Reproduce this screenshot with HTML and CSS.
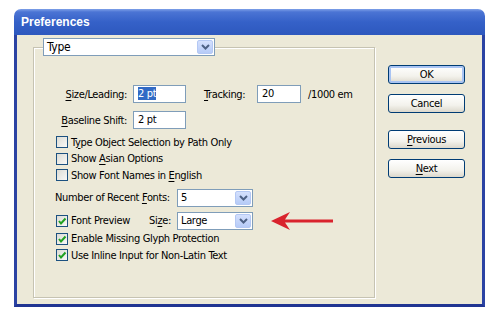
FILE: index.html
```html
<!DOCTYPE html>
<html lang="en">
<head>
    <meta charset="UTF-8">
    <title>Preferences</title>
    <link rel="stylesheet" href="styles.css">
</head>
<body>

    <div class="window">
        <div class="titlebar">Preferences</div>
        <div class="client">
            <div class="group">
                <div class="select type-select">
                    <span class="value">Type</span>
                    <span class="drop"><svg width="9" height="6" viewBox="0 0 9 6"><path d="M1 1 L4.5 4.5 L8 1" fill="none" stroke="#4d6185" stroke-width="2"/></svg></span>
                </div>

                <div class="fields">
                    <span class="lbl"><u>S</u>ize/Leading:</span>
                    <span class="field wide"><span class="hl">2 pt</span></span>
                    <span class="track"><u>T</u>racking:</span>
                    <span class="field narrow">20</span>
                    <span class="unit">/1000 em</span>

                    <span class="lbl"><u>B</u>aseline Shift:</span>
                    <span class="field wide">2 pt</span>
                </div>

                <div class="checks first">
                    <label class="check"><span class="box"></span><span>T<u>y</u>pe Object Selection by Path Only</span></label>
                    <label class="check"><span class="box"></span><span>Show <u>A</u>sian Options</span></label>
                    <label class="check"><span class="box"></span><span>Show Font Names in <u>E</u>nglish</span></label>
                </div>

                <div class="recent">
                    <span class="lbl-left">Number of Recent <u>F</u>onts:</span>
                    <div class="select small">
                        <span class="value">5</span>
                        <span class="drop"><svg width="9" height="6" viewBox="0 0 9 6"><path d="M1 1 L4.5 4.5 L8 1" fill="none" stroke="#4d6185" stroke-width="2"/></svg></span>
                    </div>
                    <span></span>

                    <div class="preview">
                        <label class="check"><span class="box on"><svg width="10" height="10" viewBox="0 0 10 10"><path d="M2 5 L4 7.5 L8.5 2.5" fill="none" stroke="#21a121" stroke-width="2"/></svg></span><span>Font Preview</span></label>
                        <span>Si<u>z</u>e:</span>
                    </div>
                    <div class="select small">
                        <span class="value">Large</span>
                        <span class="drop"><svg width="9" height="6" viewBox="0 0 9 6"><path d="M1 1 L4.5 4.5 L8 1" fill="none" stroke="#4d6185" stroke-width="2"/></svg></span>
                    </div>
                    <svg class="arrow" width="62" height="20" viewBox="0 0 62 20">
                        <path d="M0 10 L19 1 L14 8.5 L62 8.5 L62 11.5 L14 11.5 L19 19 Z" fill="#d9232d"/>
                    </svg>
                </div>

                <div class="checks">
                    <label class="check"><span class="box on"><svg width="10" height="10" viewBox="0 0 10 10"><path d="M2 5 L4 7.5 L8.5 2.5" fill="none" stroke="#21a121" stroke-width="2"/></svg></span><span>Enable Missing Glyph Protection</span></label>
                    <label class="check"><span class="box on"><svg width="10" height="10" viewBox="0 0 10 10"><path d="M2 5 L4 7.5 L8.5 2.5" fill="none" stroke="#21a121" stroke-width="2"/></svg></span><span>Use Inline Input for Non-Latin Text</span></label>
                </div>
            </div>

            <div class="buttons">
                <button class="btn default">OK</button>
                <button class="btn">Cancel</button>
                <button class="btn gap"><u>P</u>revious</button>
                <button class="btn"><u>N</u>ext</button>
            </div>
        </div>
    </div>

</body>
</html>
```

FILE: styles.css
```css
body {
    margin: 0;
    background: #fff;
    font-family: "DejaVu Sans Condensed", "Liberation Sans", sans-serif;
    font-size: 11px;
    letter-spacing: -0.35px;
    color: #000;
}
u {
    text-decoration-thickness: 1px;
    text-underline-offset: 2px;
}
.window {
    width: 471px;
    margin: 9px 0 0 14px;
}
.titlebar {
    height: 26px;
    padding-left: 7px;
    border-radius: 7px 7px 0 0;
    background: linear-gradient(#7ea0e8, #4b74d4 3px, #3561c8 50%, #2d58be);
    color: #fff;
    font-family: "Liberation Sans", sans-serif;
    font-weight: bold;
    font-size: 12px;
    letter-spacing: 0;
    line-height: 27px;
}
.client {
    box-sizing: border-box;
    height: 272px;
    display: flex;
    align-items: flex-start;
    padding: 12px 0 0 16px;
    border: 3px solid #2b43a3;
    border-top: 0;
    border-bottom-color: #213592;
    background: #ece9d8;
}
.group {
    box-sizing: border-box;
    width: 342px;
    height: 251px;
    padding-left: 21px;
    border: 1px solid #c6c3b2;
    box-shadow: 1px 1px 0 #fff, inset 1px 1px 0 #fff;
}

/* combo boxes */
.select {
    box-sizing: border-box;
    display: flex;
    height: 18px;
    border: 1px solid #7f9db9;
    background: #fff;
}
.select .value {
    flex: 1;
    padding-left: 3px;
    line-height: 16px;
}
.drop {
    display: flex;
    align-items: center;
    justify-content: center;
    width: 14px;
    margin: 1px;
    border: 1px solid #b4c8f4;
    border-radius: 2px;
    background: linear-gradient(#d4e0fd, #b6cbf7);
}
.type-select {
    width: 172px;
    margin: -10px 0 0 -12px;
}
.type-select .value {
    font-size: 12px;
}

/* text fields */
.fields {
    display: grid;
    grid-template-columns: 72px 53px 59px 44px auto;
    justify-content: start;
    column-gap: 6px;
    row-gap: 8px;
    align-items: center;
    margin-top: 29px;
}
.lbl {
    text-align: right;
}
.track {
    margin-left: 12px;
}
.unit {
    margin-left: 1px;
}
.field {
    box-sizing: border-box;
    height: 18px;
    padding-left: 4px;
    border: 1px solid #7f9db9;
    background: #fff;
    line-height: 16px;
}
.hl {
    background: #316ac5;
    color: #fff;
}

/* check boxes */
.checks {
    display: flex;
    flex-direction: column;
    margin-left: 1px;
}
.checks.first {
    margin-top: 5px;
}
.check {
    display: flex;
    align-items: center;
    gap: 3px;
    height: 16.5px;
}
.box {
    box-sizing: border-box;
    display: flex;
    align-items: center;
    justify-content: center;
    width: 12px;
    height: 12px;
    border: 1px solid #1c5180;
    background: linear-gradient(135deg, #dcdcd5, #f8f8f6);
}

/* recent fonts and preview */
.recent {
    display: grid;
    grid-template-columns: 116px 76px auto;
    justify-content: start;
    column-gap: 6px;
    row-gap: 4px;
    align-items: center;
    margin-top: 5px;
}
.lbl-left {
    white-space: nowrap;
}
.preview {
    display: flex;
    justify-content: space-between;
    align-items: center;
    margin-left: 1px;
}
.arrow {
    margin-left: 12px;
}

/* buttons */
.buttons {
    display: flex;
    flex-direction: column;
    gap: 10px;
    margin: 18px 0 0 13px;
}
.btn {
    width: 77px;
    height: 19px;
    padding: 0;
    border: 1px solid #003c74;
    border-radius: 3px;
    background: linear-gradient(#ffffff, #f3f2ec 60%, #dcd8cc);
    font-family: inherit;
    font-size: 11px;
    letter-spacing: inherit;
    color: #000;
}
.btn.default {
    box-shadow: inset 0 0 0 2px #a9c4f3;
}
.btn.gap {
    margin-top: 7px;
}
```
